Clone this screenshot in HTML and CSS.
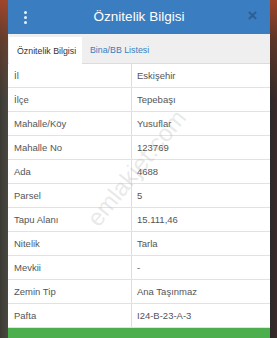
FILE: index.html
```html
<!DOCTYPE html>
<html lang="tr">
<head>
<meta charset="utf-8">
<link rel="stylesheet" href="styles.css">
</head>
<body>
<div class="modal">
  <div class="header">
    <span class="kebab"><i></i><i></i><i></i></span>
    <span class="title">Öznitelik Bilgisi</span>
    <span class="close">×</span>
  </div>
  <div class="tabs">
    <div class="tab active">Öznitelik Bilgisi</div>
    <div class="tab">Bina/BB Listesi</div>
  </div>
  <div class="table">
    <div class="row"><div class="k">İl</div><div class="v">Eskişehir</div></div>
    <div class="row"><div class="k">İlçe</div><div class="v">Tepebaşı</div></div>
    <div class="row"><div class="k">Mahalle/Köy</div><div class="v">Yusuflar</div></div>
    <div class="row"><div class="k">Mahalle No</div><div class="v">123769</div></div>
    <div class="row"><div class="k">Ada</div><div class="v">4688</div></div>
    <div class="row"><div class="k">Parsel</div><div class="v">5</div></div>
    <div class="row"><div class="k">Tapu Alanı</div><div class="v">15.111,46</div></div>
    <div class="row"><div class="k">Nitelik</div><div class="v">Tarla</div></div>
    <div class="row"><div class="k">Mevkii</div><div class="v">-</div></div>
    <div class="row"><div class="k">Zemin Tip</div><div class="v">Ana Taşınmaz</div></div>
    <div class="row"><div class="k">Pafta</div><div class="v">I24-B-23-A-3</div></div>
    <div class="watermark">emlakjet.com</div>
  </div>
  <div class="footer"></div>
</div>
</body>
</html>
```
FILE: styles.css
```css
html, body { margin: 0; padding: 0; }
body {
  width: 277px;
  height: 338px;
  overflow: hidden;
  font-family: "Liberation Sans", Arial, sans-serif;
  background:
    linear-gradient(180deg, rgba(170,70,40,0.9) 0px, rgba(120,60,40,0.6) 40px, rgba(40,40,35,0) 100px),
    linear-gradient(90deg, #3a3a33 0px, #4a4840 8px, #2a2a28 270px, #3b2b2a 277px);
  box-sizing: border-box;
  padding: 0 7px 0 8px;
}
.modal {
  width: 262px;
  display: flex;
  flex-direction: column;
  background: #fff;
}
.header {
  height: 34px;
  background: #3a7dc0;
  display: flex;
  align-items: center;
}
.kebab {
  width: 35px;
  display: flex;
  flex-direction: column;
  align-items: center;
  gap: 2px;
}
.kebab i {
  display: block;
  width: 3px;
  height: 3px;
  border-radius: 50%;
  background: #e6f0fa;
}
.title {
  flex: 1;
  text-align: center;
  color: #fff;
  font-size: 13.5px;
  margin-top: -1px;
}
.close {
  width: 35px;
  text-align: center;
  color: #2a5f96;
  font-size: 17px;
  font-weight: bold;
  margin-top: -2px;
}
.tabs {
  height: 30px;
  background: #efefef;
  display: flex;
  align-items: flex-end;
  padding-left: 1px;
  border-bottom: 1px solid #dcdcdc;
  box-sizing: border-box;
}
.tab {
  height: 26px;
  display: flex;
  align-items: center;
  font-size: 8.8px;
  color: #3a7dc0;
  padding: 0 7px 0 8px;
  white-space: nowrap;
}
.tab.active {
  background: #fff;
  color: #333;
  width: 73px;
  box-sizing: border-box;
  padding: 0 0 0 8px;
  margin-bottom: -1px;
  height: 27px;
}
.table {
  position: relative;
  overflow: hidden;
}
.row {
  height: 24px;
  display: flex;
  border-bottom: 1px solid #e2e2e2;
  box-sizing: border-box;
  font-size: 9.5px;
  color: #555;
}
.row:last-of-type { border-bottom: none; }
.k {
  width: 124px;
  box-sizing: border-box;
  padding-left: 6px;
  border-right: 1px solid #dedede;
  display: flex;
  align-items: center;
}
.v {
  flex: 1;
  padding-left: 5px;
  display: flex;
  align-items: center;
}
.watermark {
  position: absolute;
  left: 58px;
  top: 90px;
  font-size: 24px;
  color: rgba(180,180,180,0.3);
  transform: rotate(-51deg);
  transform-origin: center;
  pointer-events: none;
  white-space: nowrap;
}
.footer {
  height: 10px;
  background: #4cae4c;
}
```
